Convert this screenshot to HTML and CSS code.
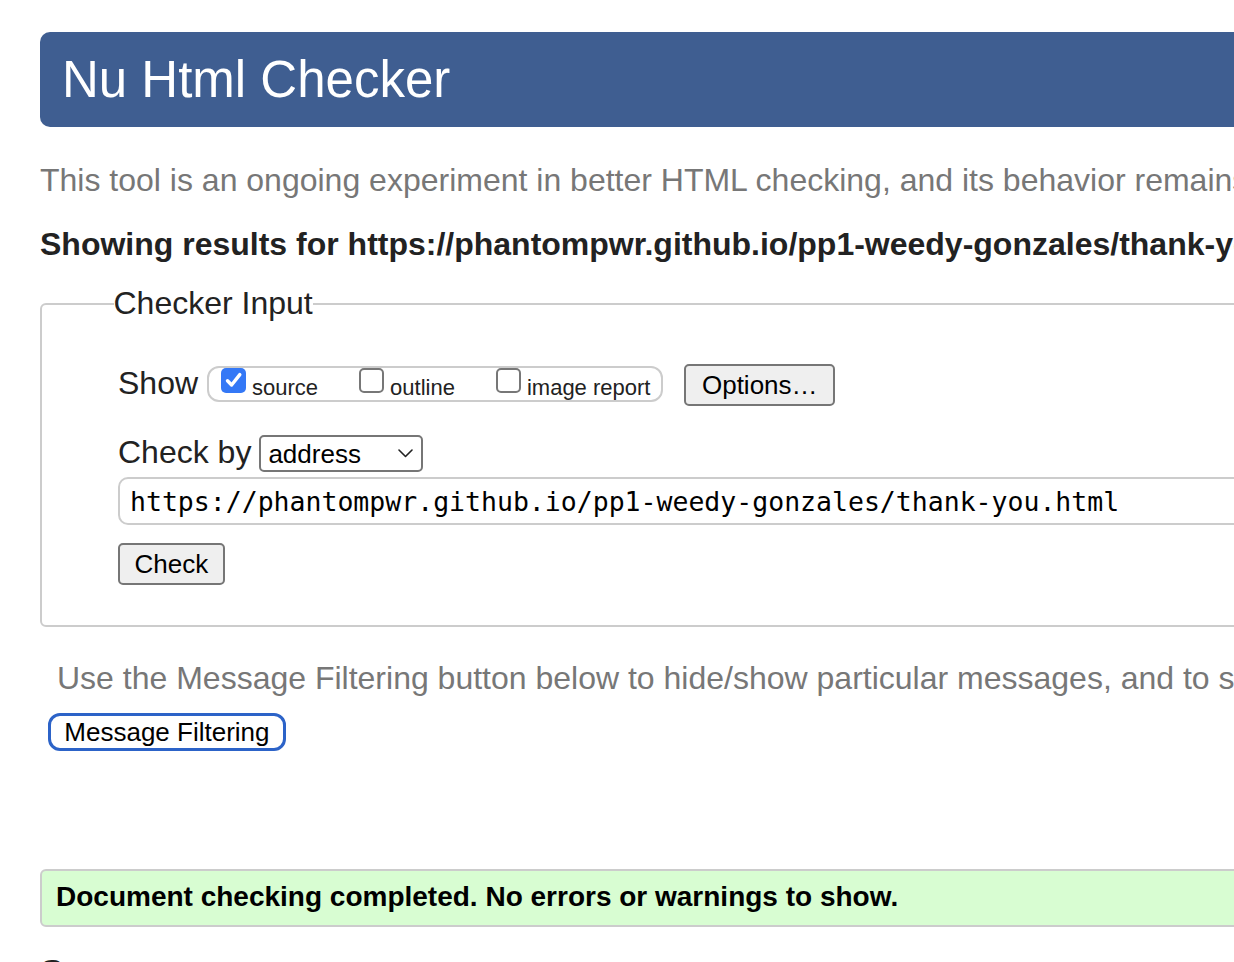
FILE: index.html
```html
<!DOCTYPE html>
<html lang="en">
<head>
<meta charset="utf-8">
<title>Showing results for https://phantompwr.github.io/pp1-weedy-gonzales/thank-you.html - Nu Html Checker</title>
<link rel="stylesheet" href="styles.css">
</head>
<body>
<div class="page">
  <header class="banner"><h1 class="title">Nu Html Checker</h1></header>
  <p class="intro">This tool is an ongoing experiment in better HTML checking, and its behavior remains subject to change</p>
  <p class="showing">Showing results for https://phantompwr.github.io/pp1-weedy-gonzales/thank-you.html</p>
  <form class="form">
    <fieldset class="checker">
      <legend class="legend">Checker Input</legend>
      <div class="row show-row">
        <span class="label">Show</span>
        <div class="opts">
          <label class="opt"><span class="cb on"><svg width="25" height="25" viewBox="0 0 25 25"><path d="M6.5 12.8 L10.6 17 L18.8 6.6" fill="none" stroke="#fff" stroke-width="3.4" stroke-linecap="round" stroke-linejoin="round"/></svg></span>source</label>
          <label class="opt"><span class="cb"></span>outline</label>
          <label class="opt"><span class="cb"></span>image report</label>
        </div>
        <button type="button" class="btn options">Options…</button>
      </div>
      <div class="row by-row">
        <span class="label">Check by</span>
        <span class="select-wrap">
          <select class="select"><option>address</option></select>
          <svg class="chev" width="15" height="9" viewBox="0 0 15 9"><path d="M1 1 L7.5 7.5 L14 1" fill="none" stroke="#222" stroke-width="1.6" stroke-linecap="round" stroke-linejoin="round"/></svg>
        </span>
      </div>
      <input class="url" type="url" value="https://phantompwr.github.io/pp1-weedy-gonzales/thank-you.html">
      <div class="check-row"><button type="button" class="btn">Check</button></div>
    </fieldset>
  </form>
  <p class="filter-note">Use the Message Filtering button below to hide/show particular messages, and to see total counts of errors and warnings.</p>
  <button type="button" class="filter-btn">Message Filtering</button>
  <div class="success"><p class="success-text">Document checking completed. No errors or warnings to show.</p></div>
  <h2 class="source-h">Source</h2>
</div>
</body>
</html>
```

FILE: styles.css
```css
* { box-sizing: border-box; }
html, body { margin: 0; overflow: hidden; background: #fff; }
body {
  font-family: "Liberation Sans", Arial, Helvetica, sans-serif;
  color: #222;
}
.page { width: 1800px; padding: 32px 0 0 40px; }

.banner {
  height: 95px;
  background: #3f5e91;
  border-radius: 10px;
  padding: 17.5px 0 0 22px;
}
.title { margin: 0; font-size: 51px; font-weight: normal; color: #fff; }

.intro { margin: 34.5px 0 0; font-size: 32px; color: #777; white-space: nowrap; }
.showing { margin: 27px 0 0; font-size: 32px; font-weight: bold; color: #222; white-space: nowrap; }

.form { margin: 0; }
.checker {
  margin: 22.5px 0 0;
  width: 1760px;
  min-width: 0;
  border: 2px solid #ccc;
  border-radius: 6px;
  padding: 42px 0 40px 76px;
}
.legend { font-size: 32px; padding: 0; margin-left: -4.5px; color: #222; }

.row { display: flex; align-items: baseline; }
.label { font-size: 32px; color: #222; }

.opts {
  display: flex;
  align-items: baseline;
  gap: 41px;
  height: 36px;
  margin-left: 9px;
  padding: 0 11px 0 12px;
  border: 2px solid #ccc;
  border-radius: 12px;
  font-size: 22px;
}
.opt { display: inline-block; color: #222; }
.cb {
  display: inline-block;
  width: 25px;
  height: 25px;
  margin: 0 6px 1.5px 0;
  vertical-align: baseline;
  border: 2px solid #777;
  border-radius: 5px;
  background: #fff;
}
.cb.on { border: none; background: #3478f6; }
.cb svg { display: block; }

.btn {
  font-family: inherit;
  font-size: 26px;
  line-height: 30px;
  padding: 4px 14.5px;
  border: 2px solid #767676;
  border-radius: 5px;
  background: #efefef;
  color: #000;
}
.options { margin-left: 21px; padding: 4px 15.5px; }

.by-row { margin-top: 27.5px; }
.select-wrap { position: relative; display: inline-block; margin-left: 8px; }
.select {
  appearance: none;
  -webkit-appearance: none;
  width: 164px;
  height: 36.5px;
  padding: 0 0 0 7px;
  font-family: inherit;
  font-size: 26px;
  color: #000;
  background: #fff;
  border: 2px solid #767676;
  border-radius: 5px;
}
.chev { position: absolute; right: 10px; top: 14px; pointer-events: none; }

.url {
  display: block;
  margin-top: 5px;
  width: 1640px;
  height: 48.5px;
  padding: 0 10px;
  border: 2px solid #ccc;
  border-radius: 10px;
  font-family: "DejaVu Sans Mono", monospace;
  font-size: 26.5px;
  color: #000;
  background: #fff;
}
.check-row { margin-top: 18px; }

.filter-note { margin: 33px 0 0 17px; font-size: 32px; color: #777; white-space: nowrap; }
.filter-btn {
  display: block;
  margin: 16px 0 0 8.3px;
  padding: 1px 13px;
  font-family: inherit;
  font-size: 26px;
  line-height: 30px;
  color: #000;
  background: #fff;
  border: 3px solid #2c63c8;
  border-radius: 12px;
}

.success {
  margin-top: 118px;
  padding: 10px 14px 12px;
  background: #d8fdd2;
  border: 2px solid #ccc;
  border-radius: 6px;
}
.success-text { margin: 0; font-size: 28px; font-weight: bold; color: #000; white-space: nowrap; }

.source-h { margin: 26px 0 0; font-size: 36px; font-weight: bold; color: #222; }
```
